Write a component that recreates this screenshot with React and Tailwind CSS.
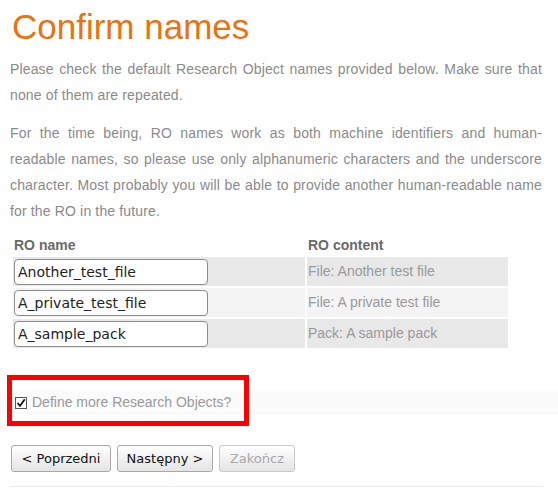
import React, { useState } from "react";

const rows = [
  { name: "Another_test_file", content: "File: Another test file", bg: "bg-[#e8e8e8]" },
  { name: "A_private_test_file", content: "File: A private test file", bg: "bg-[#f4f4f4]" },
  { name: "A_sample_pack", content: "Pack: A sample pack", bg: "bg-[#e8e8e8]" },
];

// Small checkbox drawn like the GTK one in the screenshot
function CheckBox({ checked }) {
  return (
    <svg width="12" height="12" viewBox="0 0 12 12" className="shrink-0">
      <rect x="0.5" y="0.5" width="11" height="11" fill="#fff" stroke="#555" />
      {checked && (
        <path d="M2.5 6 L5 8.8 L9.8 2.2" fill="none" stroke="#111" strokeWidth="1.8" />
      )}
    </svg>
  );
}

function WizButton({ children, disabled, w }) {
  return (
    <button
      disabled={disabled}
      className={`${w} h-[27px] rounded-[3px] border bg-gradient-to-b from-white to-[#e4e4e4] text-[13px] font-['DejaVu_Sans',sans-serif] ${
        disabled ? "text-[#a8a8a8] border-[#c8c8c8]" : "text-[#111] border-[#a9a9a9]"
      }`}
    >
      {children}
    </button>
  );
}

export default function App() {
  const [names, setNames] = useState(rows.map((r) => r.name));
  const [more, setMore] = useState(true);

  return (
    <div className="w-[558px] h-[490px] bg-white font-['Liberation_Sans',Arial,sans-serif] overflow-hidden">
      <div className="pl-[10px] pr-[16px] pt-[7px]">
        <h1 className="text-[35px] leading-[40px] text-[#e8730f] pl-[2px]">Confirm names</h1>

        <p className="mt-[9px] text-[14px] leading-[26px] tracking-[0.15px] text-[#8a8a8a] text-justify">
          Please check the default Research Object names provided below. Make sure that
          none of them are repeated.
        </p>
        <p className="mt-[12px] text-[14px] leading-[26px] tracking-[0.15px] text-[#8a8a8a] text-justify">
          For the time being, RO names work as both machine identifiers and human-readable
          names, so please use only alphanumeric characters and the underscore character.
          Most probably you will be able to provide another human-readable name for the RO in
          the future.
        </p>

        <table className="mt-[9px] ml-[1px] border-separate border-spacing-[2px] text-[14px]">
          <thead>
            <tr>
              <th className="w-[292px] h-[20px] p-0 text-left font-bold text-[#6a6a6a] leading-[20px] pl-[1px]">RO name</th>
              <th className="w-[201px] h-[20px] p-0 text-left font-bold text-[#6a6a6a] leading-[20px] pl-[1px]">RO content</th>
            </tr>
          </thead>
          <tbody>
            {rows.map((r, i) => (
              <tr key={i}>
                <td className={`${r.bg} h-[29px] p-0 align-middle`}>
                  <input
                    value={names[i]}
                    onChange={(e) => {
                      const n = [...names];
                      n[i] = e.target.value;
                      setNames(n);
                    }}
                    className="block w-[194px] h-[26px] ml-[1px] px-[3px] bg-white border border-[#8c8c8c] rounded-[4px] text-[14px] text-[#222] font-['DejaVu_Sans',sans-serif] outline-none"
                  />
                </td>
                <td className={`${r.bg} h-[29px] p-0 pl-[1px] align-middle text-[#9a9a9a]`}>{r.content}</td>
              </tr>
            ))}
          </tbody>
        </table>
      </div>

      {/* Highlighted option */}
      <div className="mt-[25px] pt-[15px] relative">
        <div className="h-[25px] bg-[#fbfbfb] flex items-center pl-[15px] gap-[5px]">
          <button onClick={() => setMore(!more)} className="flex">
            <CheckBox checked={more} />
          </button>
          <span className="text-[14px] text-[#9a9a9a]">Define more Research Objects?</span>
        </div>
        <div className="absolute left-[7px] top-0 w-[242px] h-[51px] border-[5px] border-[#ff0000] pointer-events-none" />
      </div>

      <div className="mt-[30px] pl-[11px] flex gap-[6px]">
        <WizButton w="w-[100px]">&lt; Poprzedni</WizButton>
        <WizButton w="w-[96px]">Następny &gt;</WizButton>
        <WizButton w="w-[76px]" disabled>Zakończ</WizButton>
      </div>
      <div className="mt-[14px] ml-[10px] w-[533px] h-px bg-[#ececec]" />
    </div>
  );
}
